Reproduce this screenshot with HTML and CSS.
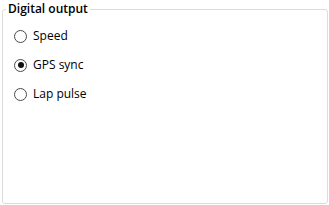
FILE: index.html
```html
<!DOCTYPE html>
<html>
<head>
<meta charset="utf-8">
<link rel="stylesheet" href="styles.css">
</head>
<body>
<fieldset class="group">
  <legend class="group-title">Digital output</legend>
  <div class="options">
    <label class="radio"><span class="dot"></span><span class="label">Speed</span></label>
    <label class="radio"><span class="dot checked"></span><span class="label">GPS sync</span></label>
    <label class="radio"><span class="dot"></span><span class="label">Lap pulse</span></label>
  </div>
</fieldset>
</body>
</html>
```
FILE: styles.css
```css
html, body {
  margin: 0;
  padding: 0;
  background: #ffffff;
}
body {
  width: 329px;
  height: 205px;
  font-family: "Open Sans", "Noto Sans", sans-serif;
  font-size: 12px;
  color: #000;
  padding-top: 1px;
  box-sizing: border-box;
}
.group {
  margin: 0 1px 0 2px;
  padding: 0;
  border: 1px solid #dcdcdc;
  border-radius: 3px;
  height: 203px;
  box-sizing: border-box;
}
.group-title {
  margin-left: 3px;
  padding: 0 2px;
  line-height: 16px;
  font-weight: 600;
  font-size: 12px;
}
.options {
  display: flex;
  flex-direction: column;
  gap: 13px;
  padding: 11px 0 0 11px;
}
.radio {
  display: flex;
  align-items: center;
  gap: 6px;
  height: 16px;
}
.dot {
  width: 13px;
  height: 13px;
  border: 1px solid #4a4a4a;
  border-radius: 50%;
  box-sizing: border-box;
  display: flex;
  align-items: center;
  justify-content: center;
}
.dot.checked::after {
  content: "";
  width: 6px;
  height: 6px;
  border-radius: 50%;
  background: #111;
}
.label {
  line-height: 16px;
}
```
